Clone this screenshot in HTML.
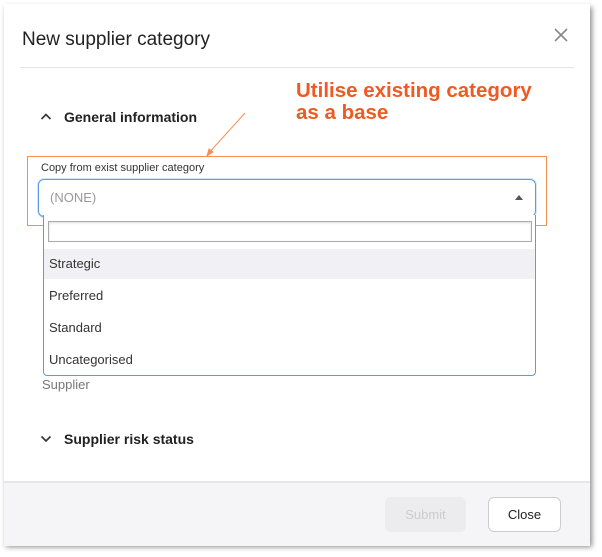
<!DOCTYPE html>
<html><head><style>
body{margin:0;width:602px;height:557px;background:#fff;font-family:"Liberation Sans",sans-serif;position:relative;overflow:hidden}
.dlg{position:absolute;left:4px;top:4px;width:586px;height:540px;background:#fff;box-shadow:2px 3px 5px rgba(0,0,0,.45)}
.abs{position:absolute}
.footer{position:absolute;left:0;top:477px;width:586px;height:63px;background:#f5f5f8;border-top:2px solid #e6e6ea}
.item{position:absolute;left:5px;font-size:13px;color:#333}
</style></head><body>
<div class="dlg">
 <div class="abs" style="left:18px;top:25px;font-size:19px;color:#222">New supplier category</div>
 <svg class="abs" style="left:550px;top:24px" width="14" height="14"><path d="M1 1L13 13M13 1L1 13" stroke="#888" stroke-width="1.6"/></svg>
 <div class="abs" style="left:16px;top:63px;width:554px;height:1px;background:#e4e4e8"></div>
 <div class="abs" style="left:292px;top:76px;font-size:20.5px;font-weight:bold;line-height:22px;color:#f05a22">Utilise existing category<br>as a base</div>
 <svg class="abs" style="left:36px;top:108px" width="12" height="10"><path d="M1.5 7L6 2.5L10.5 7" stroke="#333" stroke-width="1.6" fill="none"/></svg>
 <div class="abs" style="left:60px;top:105px;font-size:14px;font-weight:bold;color:#222">General information</div>
 <svg class="abs" style="left:0;top:0" width="586" height="540"><path d="M241 109L203 151" stroke="#f5904f" stroke-width="1"/><path d="M203 152L205 145L209 148Z" fill="#f5904f" stroke="#f5904f"/></svg>
 <div class="abs" style="left:23px;top:152px;width:518px;height:68px;border:1px solid #f5904f"></div>
 <div class="abs" style="left:37px;top:158px;font-size:11px;color:#333">Copy from exist supplier category</div>
 <div class="abs" style="left:34px;top:175px;width:496px;height:36px;border:1.5px solid #5b9be0;border-radius:6px;box-shadow:0 0 0 1px #d6e6f7"></div>
 <div class="abs" style="left:46px;top:186px;font-size:13px;color:#999">(NONE)</div>
 <svg class="abs" style="left:511px;top:191px" width="8" height="6"><path d="M0 5L4 0L8 5Z" fill="#555"/></svg>
 <div class="abs" style="left:39px;top:211px;width:491px;height:160px;border:1px solid #5b9be0;border-top:none;border-radius:0 0 4px 4px;background:#fff">
  <div class="abs" style="left:4px;top:6px;width:482px;height:19px;border:1px solid #aaa;box-shadow:inset 0 1px 2px #ddd"></div>
  <div class="abs" style="left:0;top:34px;width:491px;height:30px;background:#f1f1f5"></div>
  <div class="item" style="top:41px">Strategic</div>
  <div class="item" style="top:73px">Preferred</div>
  <div class="item" style="top:105px">Standard</div>
  <div class="item" style="top:137px">Uncategorised</div>
 </div>
 <div class="abs" style="left:38px;top:373px;font-size:13px;color:#777">Supplier</div>
 <svg class="abs" style="left:36px;top:430px" width="12" height="10"><path d="M1.5 2.5L6 7L10.5 2.5" stroke="#333" stroke-width="1.6" fill="none"/></svg>
 <div class="abs" style="left:60px;top:427px;font-size:14px;font-weight:bold;color:#222">Supplier risk status</div>
 <div class="footer">
  <div class="abs" style="left:381px;top:14px;width:81px;height:35px;background:#ececef;border-radius:6px;color:#ccc;font-size:13px;text-align:center;line-height:35px">Submit</div>
  <div class="abs" style="left:484px;top:14px;width:71px;height:33px;border:1px solid #ccc;border-radius:6px;background:#fff;color:#222;font-size:13px;text-align:center;line-height:33px">Close</div>
 </div>
</div>
</body></html>
